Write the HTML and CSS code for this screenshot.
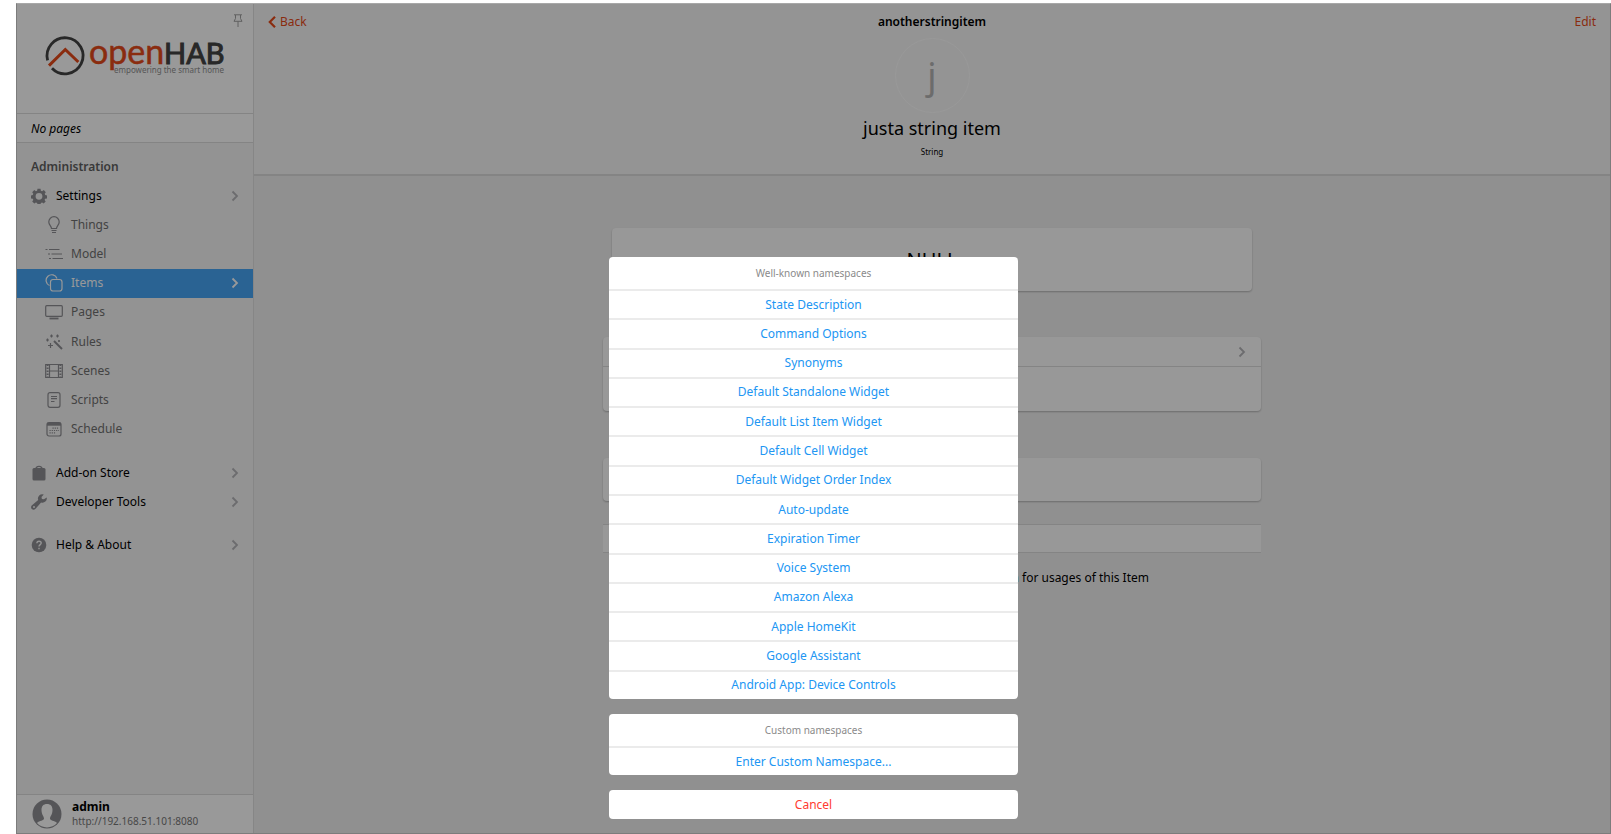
FILE: index.html
```html
<!DOCTYPE html>
<html lang="en">
<head>
<meta charset="utf-8">
<title>openHAB - anotherstringitem</title>
<link rel="stylesheet" href="styles.css">
</head>
<body>
<svg class="sprite" aria-hidden="true">
  <symbol id="chevron" viewBox="0 0 8 12"><path d="M1.5 1.5 6 6 1.5 10.5" fill="none" stroke="currentColor" stroke-width="1.800"/></symbol>
</svg>
<div class="app">
  <aside class="sidebar">
    <div class="brand">
      <svg class="logo" viewBox="0 0 184 48" role="img" aria-label="openHAB">
        <path d="M1.600 25.300A18 18 0 1 1 6 33.200" fill="none" stroke="#434343" stroke-width="2.800"/>
        <path d="M3 30.600 19.300 14.500 32.300 27" fill="none" stroke="#e64a19" stroke-width="3"/>
        <text x="43" y="29" class="logo-open">open</text>
        <text x="118" y="29" class="logo-hab">HAB</text>
        <text x="178" y="38" class="logo-tag" text-anchor="end">empowering the smart home</text>
      </svg>
      <button class="pin" aria-label="Pin sidebar">
        <svg width="10" height="13" viewBox="0 0 10 13" fill="none" stroke="currentColor"><path d="M1 .8h8M2.500 1v3.500L1 7.300h8L7.500 4.500V1M5 7.300V13"/></svg>
      </button>
    </div>
    <p class="no-pages">No pages</p>
    <nav class="menu">
      <h2 class="menu-title">Administration</h2>
      <a class="item" href="#"><svg class="icon" viewBox="0 0 16 16"><path fill="currentColor" fill-rule="evenodd" d="M6.500.8h3l.4 1.900 1.200.5L12.800 2.100l2 2.100-1.100 1.600.5 1.200 1.800.4v3l-1.900.4-.5 1.200 1.100 1.600-2 2-1.600-1.100-1.200.5-.4 1.400h-3l-.4-1.400-1.200-.5-1.600 1.100-2.100-2 1.100-1.600-.5-1.200L0 10.400v-3L1.800 7l.5-1.200L1.200 4.200l2.100-2.100 1.600 1.100 1.200-.5zM8 4.900a3.400 3.400 0 1 0 0 6.800 3.400 3.400 0 0 0 0-6.800z"/></svg><span>Settings</span><svg class="chev"><use href="#chevron"/></svg></a>
      <ul class="submenu">
        <li><a class="subitem" href="#"><svg class="icon" viewBox="0 0 18 18"><path d="M6.500 12.500C6.500 10 3.800 9 3.800 5.900a5.200 5.200 0 0 1 10.400 0c0 3.100-2.700 4.100-2.700 6.600zM6.500 14.500h5M7 16.500h4"/></svg><span>Things</span></a></li>
        <li><a class="subitem" href="#"><svg class="icon" viewBox="0 0 18 18"><path d="M.5 4.500h2M4 4.500h10.500M3 9h2M6.500 9h10.500M4 13.500h2M7.500 13.500H18"/></svg><span>Model</span></a></li>
        <li><a class="subitem active" href="#"><svg class="icon" viewBox="0 0 18 18"><path d="M4.500 11.500A5.600 5.600 0 1 1 12 4.500"/><rect x="5.500" y="5.500" width="11.500" height="11.500" rx="2.500"/></svg><span>Items</span><svg class="chev"><use href="#chevron"/></svg></a></li>
        <li><a class="subitem" href="#"><svg class="icon" viewBox="0 0 18 18"><rect x=".7" y="2.700" width="16.600" height="10.600" rx="1"/><path stroke-width="1.800" d="M4.500 15.500h9"/></svg><span>Pages</span></a></li>
        <li><a class="subitem" href="#"><svg class="icon" viewBox="0 0 18 18"><path stroke-width="2" d="m9 8 8 8"/><path d="M6.500 1.500v3M5 3h3M12.500 1.500v3M11 3h3M2.500 5.500v3M1 7h3M5.500 10v5M3 12.500h5M14 7v2M13 8h2"/></svg><span>Rules</span></a></li>
        <li><a class="subitem" href="#"><svg class="icon" viewBox="0 0 18 18"><path d="M.7 2.500h16.600v13H.7zM4.500 2.500v13M13.500 2.500v13M4.500 9h9"/><path stroke-width="2" stroke-dasharray="1.500 1.500" d="M2.600 2.500v13M15.400 2.500v13"/></svg><span>Scenes</span></a></li>
        <li><a class="subitem" href="#"><svg class="icon" viewBox="0 0 18 18"><rect x="3" y="1.700" width="12" height="14.600" rx="2"/><path d="M6 5.500h6M6 7.700h6M6 10.500h3.500"/></svg><span>Scripts</span></a></li>
        <li><a class="subitem" href="#"><svg class="icon" viewBox="0 0 18 18"><rect x="2" y="2.500" width="14" height="13.500" rx="2"/><path stroke-width="3" d="M2 4.200h14"/><path stroke-dasharray="1.200 1" d="M7.500 8.200H14M4.500 10.500H14M4.500 12.800H11"/></svg><span>Schedule</span></a></li>
      </ul>
      <a class="item spaced" href="#"><svg class="icon" viewBox="0 0 16 16"><rect x="1.500" y="3" width="13" height="12.500" rx="1.500" fill="currentColor"/><path fill="none" stroke="currentColor" stroke-width="1.200" d="M4.800 4.500C4.800.3 11.200.3 11.200 4.500"/></svg><span>Add-on Store</span><svg class="chev"><use href="#chevron"/></svg></a>
      <a class="item" href="#"><svg class="icon" viewBox="0 0 16 16"><path fill="currentColor" fill-rule="evenodd" d="M15.700 3.400a4.300 4.300 0 0 1-5.600 5L4.800 14.600a2.600 2.600 0 1 1-3.500-3.700L7.200 6A4.300 4.300 0 0 1 12.800.5L10.500 2.900l.4 2 2 .4zM3 11.900a1 1 0 1 0 0 2 1 1 0 0 0 0-2z"/></svg><span>Developer Tools</span><svg class="chev"><use href="#chevron"/></svg></a>
      <a class="item spaced" href="#"><svg class="icon" viewBox="0 0 16 16"><circle cx="8" cy="8" r="7.300" fill="currentColor"/><path fill="none" stroke="#f6f6f6" stroke-width="1.400" d="M5.900 6.200c0-2.800 4.300-2.500 4.300-.2C10.200 7.600 8 7.600 8 9.500M8 10.800v1.500"/></svg><span>Help &amp; About</span><svg class="chev"><use href="#chevron"/></svg></a>
    </nav>
    <a class="user" href="#">
      <svg class="avatar" viewBox="0 0 30 30"><circle cx="15" cy="15" r="14.500" fill="#8e8e93"/><path fill="#fff" d="M5 24c2.500-2.800 7-2 7-4.500 0-2-2.500-4-2.500-8.500C9.500 7 11.500 5 15 5s5.500 2 5.500 6c0 4.500-2.500 6.500-2.500 8.500 0 2.500 4.500 1.700 7 4.500a13.500 13.500 0 0 1-20 0z"/></svg>
      <span class="user-text"><strong>admin</strong><span>http://192.168.51.101:8080</span></span>
    </a>
  </aside>
  <main class="page">
    <header class="head">
      <div class="navbar">
        <a class="nav-link" href="#"><svg class="back" viewBox="0 0 8 12"><path d="M7 .8 1.800 6 7 11.200" fill="none" stroke="currentColor" stroke-width="2.200"/></svg>Back</a>
        <h1 class="nav-title">anotherstringitem</h1>
        <a class="nav-link end" href="#">Edit</a>
      </div>
      <div class="initial">j</div>
      <p class="name">justa string item</p>
      <p class="type">String</p>
    </header>
    <div class="content">
      <div class="card state">NULL</div>
      <div class="card meta">
        <a class="meta-row" href="#" aria-label="Metadata"><svg class="chev"><use href="#chevron"/></svg></a>
        <div class="meta-add"></div>
      </div>
      <div class="card links"></div>
      <div class="strip"></div>
      <p class="usage"><a href="#">Search</a> for usages of this Item</p>
    </div>
  </main>
  <div class="backdrop">
    <div class="sheet" role="dialog" aria-label="Add metadata">
      <div class="group known">
        <div class="label">Well-known namespaces</div>
        <button>State Description</button>
        <button>Command Options</button>
        <button>Synonyms</button>
        <button>Default Standalone Widget</button>
        <button>Default List Item Widget</button>
        <button>Default Cell Widget</button>
        <button>Default Widget Order Index</button>
        <button>Auto-update</button>
        <button>Expiration Timer</button>
        <button>Voice System</button>
        <button>Amazon Alexa</button>
        <button>Apple HomeKit</button>
        <button>Google Assistant</button>
        <button>Android App: Device Controls</button>
      </div>
      <div class="group custom">
        <div class="label">Custom namespaces</div>
        <button>Enter Custom Namespace...</button>
      </div>
      <div class="group">
        <button class="cancel">Cancel</button>
      </div>
    </div>
  </div>
</div>
</body>
</html>
```
FILE: styles.css
```css
* { box-sizing: border-box; }
body {
  margin: 0;
  padding: 3px 0 0 16px;
  min-height: 100vh;
  display: flex;
  background: #fff;
  color: #000;
  font: 12px/20px "Noto Sans", "Open Sans", sans-serif;
}
h1, h2, p, ul { margin: 0; padding: 0; font-size: inherit; }
ul { list-style: none; }
a { color: inherit; text-decoration: none; }
button { font: inherit; border: 0; padding: 0; background: none; cursor: pointer; }
.sprite { position: absolute; width: 0; height: 0; }

.app {
  position: relative;
  flex: 1;
  display: flex;
  border: 1px solid #7c7c7c;
  border-top-color: #a8a8a8;
}

.sidebar {
  width: 237px;
  display: flex;
  flex-direction: column;
  background: #f5f5f5;
  border-right: 1px solid #e0e0e0;
}
.brand {
  position: relative;
  height: 110px;
  padding: 31px 0 0 29px;
  background: #fff;
  border-bottom: 1px solid #dcdcdc;
}
.logo { display: block; width: 184px; height: 48px; overflow: visible; }
.logo-open { font: 34px Lato, sans-serif; fill: #e64a19; stroke: #e64a19; stroke-width: .5; }
.logo-hab { font: 29px Lato, sans-serif; fill: #434343; stroke: #434343; }
.logo-tag { font: 8px "Noto Sans", sans-serif; fill: #909090; }
.pin { position: absolute; top: 10px; right: 10px; width: 10px; height: 13px; color: #a0a0a0; }
.pin svg { display: block; }
.no-pages {
  padding: 5px 14px 3px;
  background: #fff;
  border-bottom: 1px solid #dcdcdc;
  font-style: italic;
}
.menu { flex: 1; padding-top: 10px; }
.menu-title { padding: 4px 14px; font-weight: 600; color: #606060; }
.item, .subitem { display: flex; align-items: center; }
.item { height: 29px; padding: 0 14px; }
.item .icon { width: 16px; height: 16px; margin-right: 9px; color: #8e8e93; }
.spaced { margin-top: 14px; }
.chev { width: 8px; height: 12px; margin-left: auto; color: #b4b4b8; }
.submenu { display: grid; grid-auto-rows: 1fr; min-height: 234px; }
.submenu li { display: grid; }
.subitem { padding: 0 14px 0 28px; color: #707070; }
.subitem .icon {
  width: 18px;
  height: 18px;
  margin-right: 8px;
  fill: none;
  stroke: #8e8e93;
  stroke-width: 1.2;
}
.subitem.active { background: #46a5f5; color: #fff; }
.subitem.active .icon { stroke: #fff; }
.subitem.active .chev { color: #fff; }
.user {
  display: flex;
  align-items: center;
  gap: 10px;
  height: 39px;
  padding: 0 15px;
  background: #fff;
  border-top: 1px solid #dcdcdc;
}
.avatar { width: 30px; height: 30px; }
.user-text { display: flex; flex-direction: column; line-height: 15px; }
.user-text span { font-size: 10px; color: #777; }

.page { flex: 1; background: #f1f1f1; }
.head {
  display: flex;
  flex-direction: column;
  align-items: center;
  height: 172px;
  background: #f7f7f7;
  border-bottom: 2px solid #dcdcdc;
}
.navbar {
  align-self: stretch;
  display: grid;
  grid-template-columns: 1fr auto 1fr;
  padding: 8px 14px 0;
}
.nav-title { font-weight: 600; }
.nav-link { display: flex; align-items: center; gap: 4px; color: #e64a19; }
.nav-link.end { justify-self: end; }
.back { width: 8px; height: 12px; }
.initial {
  width: 75px;
  height: 75px;
  margin-top: 6px;
  border: 1px solid #fff;
  border-radius: 50%;
  font-size: 36px;
  line-height: 73px;
  text-align: center;
  color: #b4b4b4;
}
.name { margin-top: 1px; font-size: 18px; line-height: 28px; }
.type { margin-top: 3px; font-size: 8px; line-height: 14px; }
.content { width: 658px; max-width: 100%; margin: 0 auto; padding-top: 52px; }
.card {
  background: #fdfdfd;
  border-radius: 4px;
  box-shadow: 0 1px 2px rgba(0, 0, 0, .25);
}
.state { margin: 0 9px; height: 63px; font-size: 20px; line-height: 63px; text-align: center; }
.meta { margin-top: 46px; height: 74px; }
.meta-row { display: flex; align-items: center; height: 30px; padding: 0 15px; border-bottom: 1px solid #dcdcdc; }
.links { margin-top: 47px; height: 43px; }
.strip { margin-top: 23px; height: 29px; background: #fdfdfd; border: solid #dcdcdc; border-width: 1px 0; }
.usage { margin-top: 15px; padding-right: 112px; text-align: right; }
.usage a { color: #2196f3; }

.backdrop {
  position: absolute;
  inset: 0;
  display: flex;
  flex-direction: column;
  justify-content: flex-end;
  align-items: center;
  padding-bottom: 14px;
  background: rgba(0, 0, 0, .4);
}
.sheet { display: flex; flex-direction: column; gap: 15px; width: 409px; max-width: 100%; }
.group {
  display: grid;
  grid-auto-rows: 1fr;
  border-radius: 4px;
  background: #fff;
  overflow: hidden;
}
.custom { grid-template-rows: 32px 29px; }
.known { grid-template-rows: 32px; min-height: 442px; }
.label {
  font-size: 10px;
  line-height: 32px;
  text-align: center;
  color: #8a8a8a;
}
.group button { min-height: 29px; color: #2196f3; }
.label + button, .group button + button { border-top: 2px solid #ebebeb; }
.group .cancel { color: #ff3b30; }
```
